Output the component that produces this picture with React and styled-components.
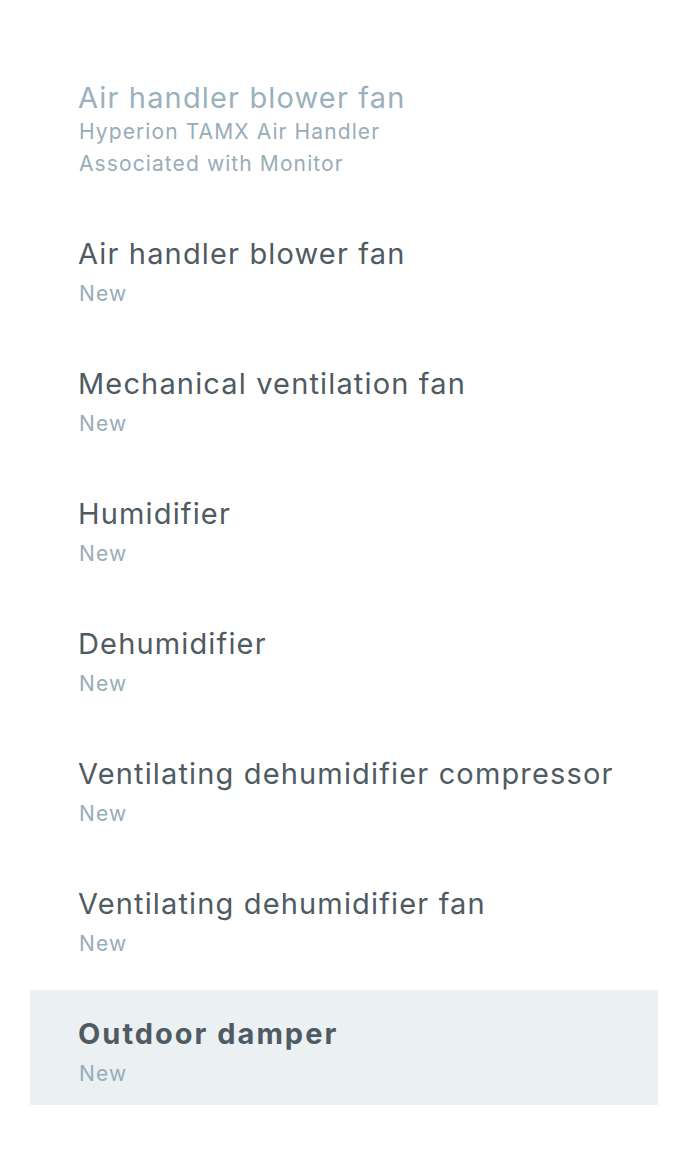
import styled, { createGlobalStyle } from "styled-components";

const GlobalStyle = createGlobalStyle`
    html, body {
        margin: 0;
        padding: 0;
        background: #fff;
    }
    body {
        font-family: "Inter", "Noto Sans", sans-serif;
    }
`;

const devices = [
    { name: "Air handler blower fan", lines: ["Hyperion TAMX Air Handler", "Associated with Monitor"], disabled: true },
    { name: "Air handler blower fan", lines: ["New"] },
    { name: "Mechanical ventilation fan", lines: ["New"] },
    { name: "Humidifier", lines: ["New"] },
    { name: "Dehumidifier", lines: ["New"] },
    { name: "Ventilating dehumidifier compressor", lines: ["New"] },
    { name: "Ventilating dehumidifier fan", lines: ["New"] },
    { name: "Outdoor damper", lines: ["New"], selected: true },
];

export default function App() {
    return (
        <>
            <GlobalStyle />
            <List>
                {devices.map((d, i) => (
                    <Item key={i} $selected={d.selected}>
                        <Title $disabled={d.disabled} $selected={d.selected}>{d.name}</Title>
                        {d.lines.map((l, j) => (
                            <Sub key={j} $status={!d.disabled}>{l}</Sub>
                        ))}
                    </Item>
                ))}
            </List>
        </>
    );
}

const List = styled.div`
    padding: 54px 30px 0;
    display: flex;
    flex-direction: column;
    gap: 15px;
`;

const Item = styled.div`
    padding: 26px 48px 15px;
    background-color: ${(p) => (p.$selected ? "#ebf0f3" : "transparent")};
`;

const Title = styled.div`
    font-size: 29px;
    line-height: 36px;
    font-weight: ${(p) => (p.$selected ? 700 : 400)};
    letter-spacing: ${(p) => (p.$selected ? "2px" : "1.15px")};
    color: ${(p) => (p.$disabled ? "#9ab1bd" : "#4f5b62")};
    white-space: nowrap;
`;

const Sub = styled.div`
    font-size: 21px;
    line-height: 32px;
    letter-spacing: 1.1px;
    color: #97adb9;
    margin-top: ${(p) => (p.$status ? "6px" : "0")};
    padding-left: 1px;
`;
